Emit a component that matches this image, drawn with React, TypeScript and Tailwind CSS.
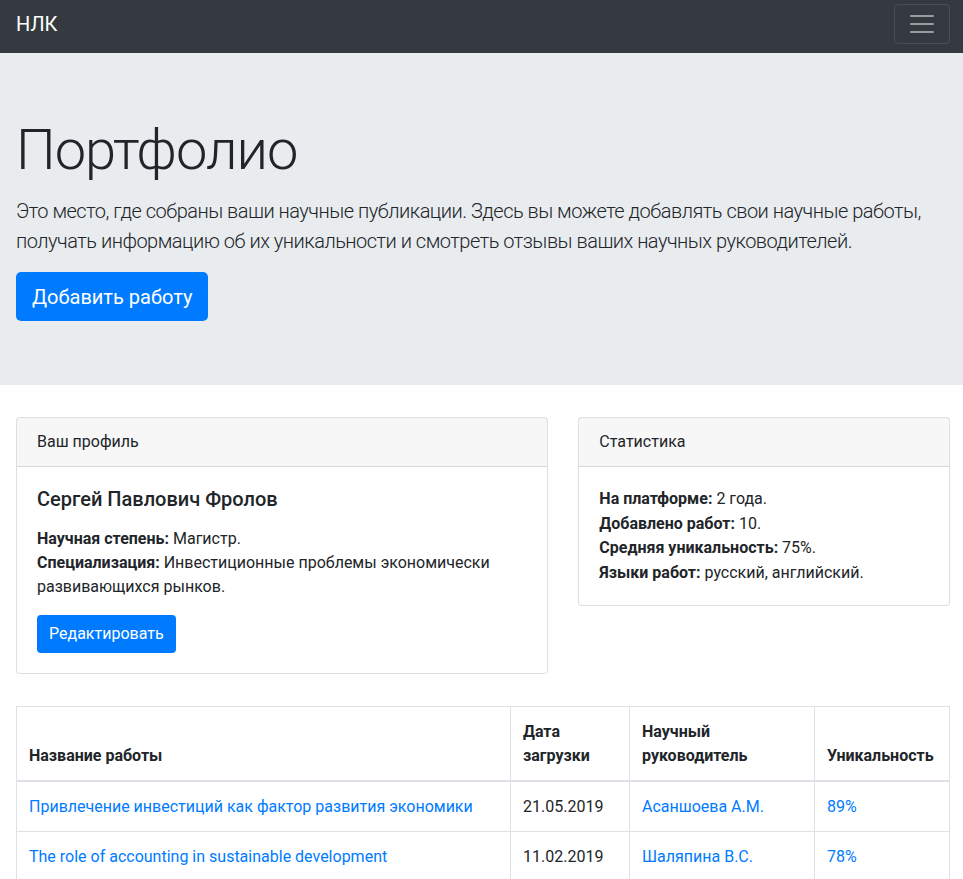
import React from "react";

const font = { fontFamily: "Roboto, 'Noto Sans', 'Liberation Sans', sans-serif" };

const works = [
  { title: "Привлечение инвестиций как фактор развития экономики", date: "21.05.2019", tutor: "Асаншоева А.М.", uniq: "89%" },
  { title: "The role of accounting in sustainable development", date: "11.02.2019", tutor: "Шаляпина В.С.", uniq: "78%" },
];

function Navbar() {
  return (
    <nav className="flex h-[53px] items-start justify-between bg-[#343a40] pl-4 pr-[13px] pt-1">
      <a className="mt-[5px] text-[20px] leading-[30px] text-white">НЛК</a>
      <button className="flex h-10 w-14 items-center justify-center rounded border border-white/10">
        <svg width="30" height="30" viewBox="0 0 30 30">
          <path d="M4 7h22M4 15h22M4 23h22" stroke="rgba(255,255,255,0.5)" strokeWidth="2" strokeLinecap="round" />
        </svg>
      </button>
    </nav>
  );
}

function Jumbotron() {
  return (
    <section className="mb-8 bg-[#e9ecef] pb-16 pl-4 pr-[13px] pt-16">
      <h1 className="mb-3 text-[56px] font-light leading-[1.2] tracking-[-1px] text-[#212529]">Портфолио</h1>
      <p className="mb-4 text-[20px] font-light leading-[30px] tracking-[-0.5px] text-[#212529]">
        Это место, где собраны ваши научные публикации. Здесь вы можете добавлять свои научные работы, получать информацию об их уникальности и смотреть отзывы ваших научных руководителей.
      </p>
      <button className="h-[49px] rounded-[5px] bg-[#007bff] px-4 text-[20px] leading-[30px] text-white">Добавить работу</button>
    </section>
  );
}

function Card({ title, children }: { title: string; children: React.ReactNode }) {
  return (
    <div className="self-start rounded border border-black/[0.125] bg-white">
      <div className="border-b border-black/[0.125] bg-black/[0.03] px-5 py-3 text-base leading-6">{title}</div>
      <div className="p-5">{children}</div>
    </div>
  );
}

export default function App() {
  return (
    <div className="min-h-screen bg-white text-[#212529]" style={font}>
      <Navbar />
      <Jumbotron />
      <main className="pl-4 pr-[13px]">
        <div className="mb-8 grid grid-cols-12 gap-[30px]">
          <div className="col-span-7">
            <Card title="Ваш профиль">
              <h5 className="mb-4 text-[20px] font-medium leading-6">Сергей Павлович Фролов</h5>
              <p className="mb-4 text-base leading-6">
                <b>Научная степень:</b> Магистр.
                <br />
                <b>Специализация:</b> Инвестиционные проблемы экономически развивающихся рынков.
              </p>
              <button className="h-[38px] rounded bg-[#007bff] px-3 text-base leading-6 text-white">Редактировать</button>
            </Card>
          </div>
          <div className="col-span-5">
            <Card title="Статистика">
              <p className="text-base leading-[24.5px]">
                <b>На платформе:</b> 2 года.
                <br />
                <b>Добавлено работ:</b> 10.
                <br />
                <b>Средняя уникальность:</b> 75%.
                <br />
                <b>Языки работ:</b> русский, английский.
              </p>
            </Card>
          </div>
        </div>
        <table className="w-full border-collapse border border-[#dee2e6] text-base leading-6">
          <thead>
            <tr>
              <th className="w-[494px] border border-b-2 border-[#dee2e6] px-3 pb-3 pt-[13px] text-left align-bottom font-bold">Название работы</th>
              <th className="w-[119px] border border-b-2 border-[#dee2e6] px-3 pb-3 pt-[13px] text-left align-bottom font-bold">Дата загрузки</th>
              <th className="w-[185px] border border-b-2 border-[#dee2e6] px-3 pb-3 pt-[13px] text-left align-bottom font-bold">Научный руководитель</th>
              <th className="border border-b-2 border-[#dee2e6] px-3 pb-3 pt-[13px] text-left align-bottom font-bold">Уникальность</th>
            </tr>
          </thead>
          <tbody>
            {works.map((w) => (
              <tr key={w.title} className="h-[50px]">
                <td className="border border-[#dee2e6] px-3 pt-[13px] pb-3"><a className="text-[#007bff]">{w.title}</a></td>
                <td className="border border-[#dee2e6] px-3 pt-[13px] pb-3">{w.date}</td>
                <td className="border border-[#dee2e6] px-3 pt-[13px] pb-3"><a className="text-[#007bff]">{w.tutor}</a></td>
                <td className="border border-[#dee2e6] px-3 pt-[13px] pb-3"><a className="text-[#007bff]">{w.uniq}</a></td>
              </tr>
            ))}
          </tbody>
        </table>
      </main>
    </div>
  );
}
